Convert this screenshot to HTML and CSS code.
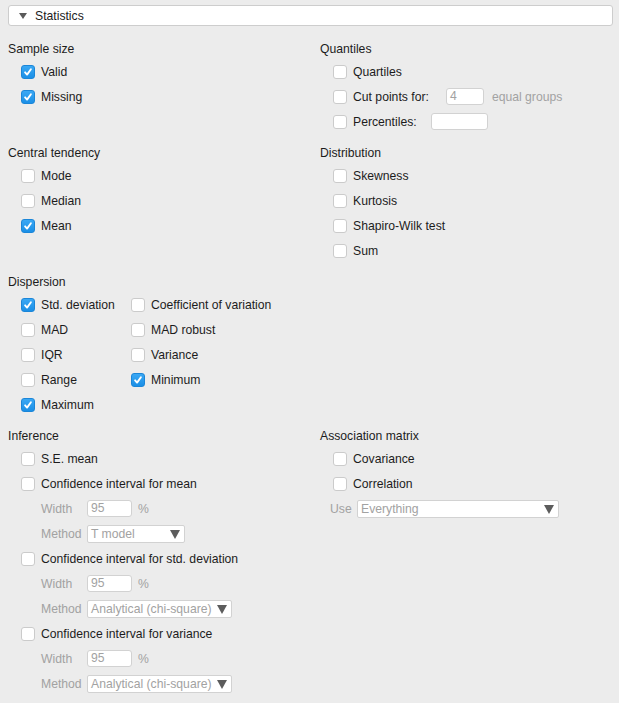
FILE: index.html
```html
<!DOCTYPE html>
<html lang="en">
<head>
    <meta charset="UTF-8">
    <meta name="viewport" content="width=device-width, initial-scale=1.0">
    <title>Descriptives - Statistics</title>
    <link rel="stylesheet" href="styles.css">
</head>
<body>
    <div class="panel-header">
        <span class="caret"></span>
        <span>Statistics</span>
    </div>

    <div class="options">
        <section class="group">
            <h3>Sample size</h3>
            <div class="row"><span class="box on"><svg viewBox="0 0 14 14"><path d="M3.6 7.4 L5.9 10 L10.4 3.8"/></svg></span>Valid</div>
            <div class="row"><span class="box on"><svg viewBox="0 0 14 14"><path d="M3.6 7.4 L5.9 10 L10.4 3.8"/></svg></span>Missing</div>
        </section>

        <section class="group">
            <h3>Quantiles</h3>
            <div class="row"><span class="box"></span>Quartiles</div>
            <div class="row"><span class="box"></span>Cut points for:<span class="field cut">4</span><span class="muted after">equal groups</span></div>
            <div class="row"><span class="box"></span>Percentiles:<span class="field pct"></span></div>
        </section>

        <section class="group">
            <h3>Central tendency</h3>
            <div class="row"><span class="box"></span>Mode</div>
            <div class="row"><span class="box"></span>Median</div>
            <div class="row"><span class="box on"><svg viewBox="0 0 14 14"><path d="M3.6 7.4 L5.9 10 L10.4 3.8"/></svg></span>Mean</div>
        </section>

        <section class="group">
            <h3>Distribution</h3>
            <div class="row"><span class="box"></span>Skewness</div>
            <div class="row"><span class="box"></span>Kurtosis</div>
            <div class="row"><span class="box"></span>Shapiro-Wilk test</div>
            <div class="row"><span class="box"></span>Sum</div>
        </section>

        <section class="group wide">
            <h3>Dispersion</h3>
            <div class="two-col">
                <div class="row"><span class="box on"><svg viewBox="0 0 14 14"><path d="M3.6 7.4 L5.9 10 L10.4 3.8"/></svg></span>Std. deviation</div>
                <div class="row"><span class="box"></span>Coefficient of variation</div>
                <div class="row"><span class="box"></span>MAD</div>
                <div class="row"><span class="box"></span>MAD robust</div>
                <div class="row"><span class="box"></span>IQR</div>
                <div class="row"><span class="box"></span>Variance</div>
                <div class="row"><span class="box"></span>Range</div>
                <div class="row"><span class="box on"><svg viewBox="0 0 14 14"><path d="M3.6 7.4 L5.9 10 L10.4 3.8"/></svg></span>Minimum</div>
                <div class="row"><span class="box on"><svg viewBox="0 0 14 14"><path d="M3.6 7.4 L5.9 10 L10.4 3.8"/></svg></span>Maximum</div>
            </div>
        </section>

        <section class="group">
            <h3>Inference</h3>
            <div class="row"><span class="box"></span>S.E. mean</div>
            <div class="row"><span class="box"></span>Confidence interval for mean</div>
            <div class="sub"><span class="muted sub-label">Width</span><span class="field width">95</span><span class="muted after-pct">%</span></div>
            <div class="sub"><span class="muted sub-label">Method</span><span class="select short">T model</span></div>
            <div class="row"><span class="box"></span>Confidence interval for std. deviation</div>
            <div class="sub"><span class="muted sub-label">Width</span><span class="field width">95</span><span class="muted after-pct">%</span></div>
            <div class="sub"><span class="muted sub-label">Method</span><span class="select long">Analytical (chi-square)</span></div>
            <div class="row"><span class="box"></span>Confidence interval for variance</div>
            <div class="sub"><span class="muted sub-label">Width</span><span class="field width">95</span><span class="muted after-pct">%</span></div>
            <div class="sub"><span class="muted sub-label">Method</span><span class="select long">Analytical (chi-square)</span></div>
        </section>

        <section class="group">
            <h3>Association matrix</h3>
            <div class="row"><span class="box"></span>Covariance</div>
            <div class="row"><span class="box"></span>Correlation</div>
            <div class="sub use"><span class="muted use-label">Use</span><span class="select full">Everything</span></div>
        </section>
    </div>
</body>
</html>
```

FILE: styles.css
```css
body {
    margin: 0;
    background-color: #ececec;
    font-family: "Liberation Sans", Arial, sans-serif;
    font-size: 12.2px;
    color: #1c1c1c;
}
.panel-header {
    display: flex;
    align-items: center;
    height: 19px;
    margin: 5px 6px 0 8px;
    background-color: white;
    border: 1px solid #cdcdcd;
    border-radius: 3px;
}
.caret {
    width: 0;
    height: 0;
    margin: 1px 8px 0 10px;
    border-left: 4px solid transparent;
    border-right: 4px solid transparent;
    border-top: 6px solid #5a5a5a;
}
.options {
    display: grid;
    grid-template-columns: 312px 1fr;
    row-gap: 11px;
    padding: 15px 0 0 8px;
}
.group h3 {
    margin: 0 0 2px 0;
    height: 16px;
    line-height: 17px;
    font-size: 12.2px;
    font-weight: normal;
}
.wide {
    grid-column: 1 / 3;
}
.row {
    display: flex;
    align-items: center;
    height: 25px;
    padding-left: 13px;
    white-space: nowrap;
}
.box {
    box-sizing: border-box;
    width: 14px;
    height: 14px;
    margin-right: 6px;
    background-color: white;
    border: 1px solid #cbcbcb;
    border-radius: 3px;
    flex-shrink: 0;
}
.box.on {
    background: linear-gradient(#3aa8f4, #1b8fe6);
    border-color: #1b86d8;
}
.box svg {
    display: block;
    width: 12px;
    height: 12px;
}
.box path {
    fill: none;
    stroke: white;
    stroke-width: 2.2;
    stroke-linecap: round;
    stroke-linejoin: round;
}
.two-col {
    display: grid;
    grid-template-columns: 110px 1fr;
}
.muted {
    color: #a2a2a2;
}
.field,
.select {
    box-sizing: border-box;
    display: inline-block;
    height: 17px;
    line-height: 15px;
    padding: 0 3px;
    background-color: white;
    border: 1px solid #d2d2d2;
    border-radius: 3px;
    color: #a2a2a2;
}
.field.cut {
    width: 38px;
    margin-left: 17px;
}
.after {
    margin-left: 8px;
}
.field.pct {
    width: 57px;
    margin-left: 14px;
}
.sub {
    display: flex;
    align-items: center;
    height: 25px;
    padding-left: 33px;
    white-space: nowrap;
}
.sub-label {
    width: 46px;
}
.field.width {
    width: 45px;
}
.after-pct {
    margin-left: 6px;
}
.select {
    position: relative;
    height: 18px;
    line-height: 16px;
    padding-left: 3px;
    border-radius: 2px;
}
.select::after {
    content: "";
    position: absolute;
    right: 4px;
    top: 4px;
    border-left: 5.5px solid transparent;
    border-right: 5.5px solid transparent;
    border-top: 9px solid #5c5c5c;
}
.select.short {
    width: 98px;
}
.select.long {
    width: 145px;
}
.sub.use {
    padding-left: 10px;
}
.use-label {
    width: 27px;
}
.select.full {
    width: 202px;
}
```
